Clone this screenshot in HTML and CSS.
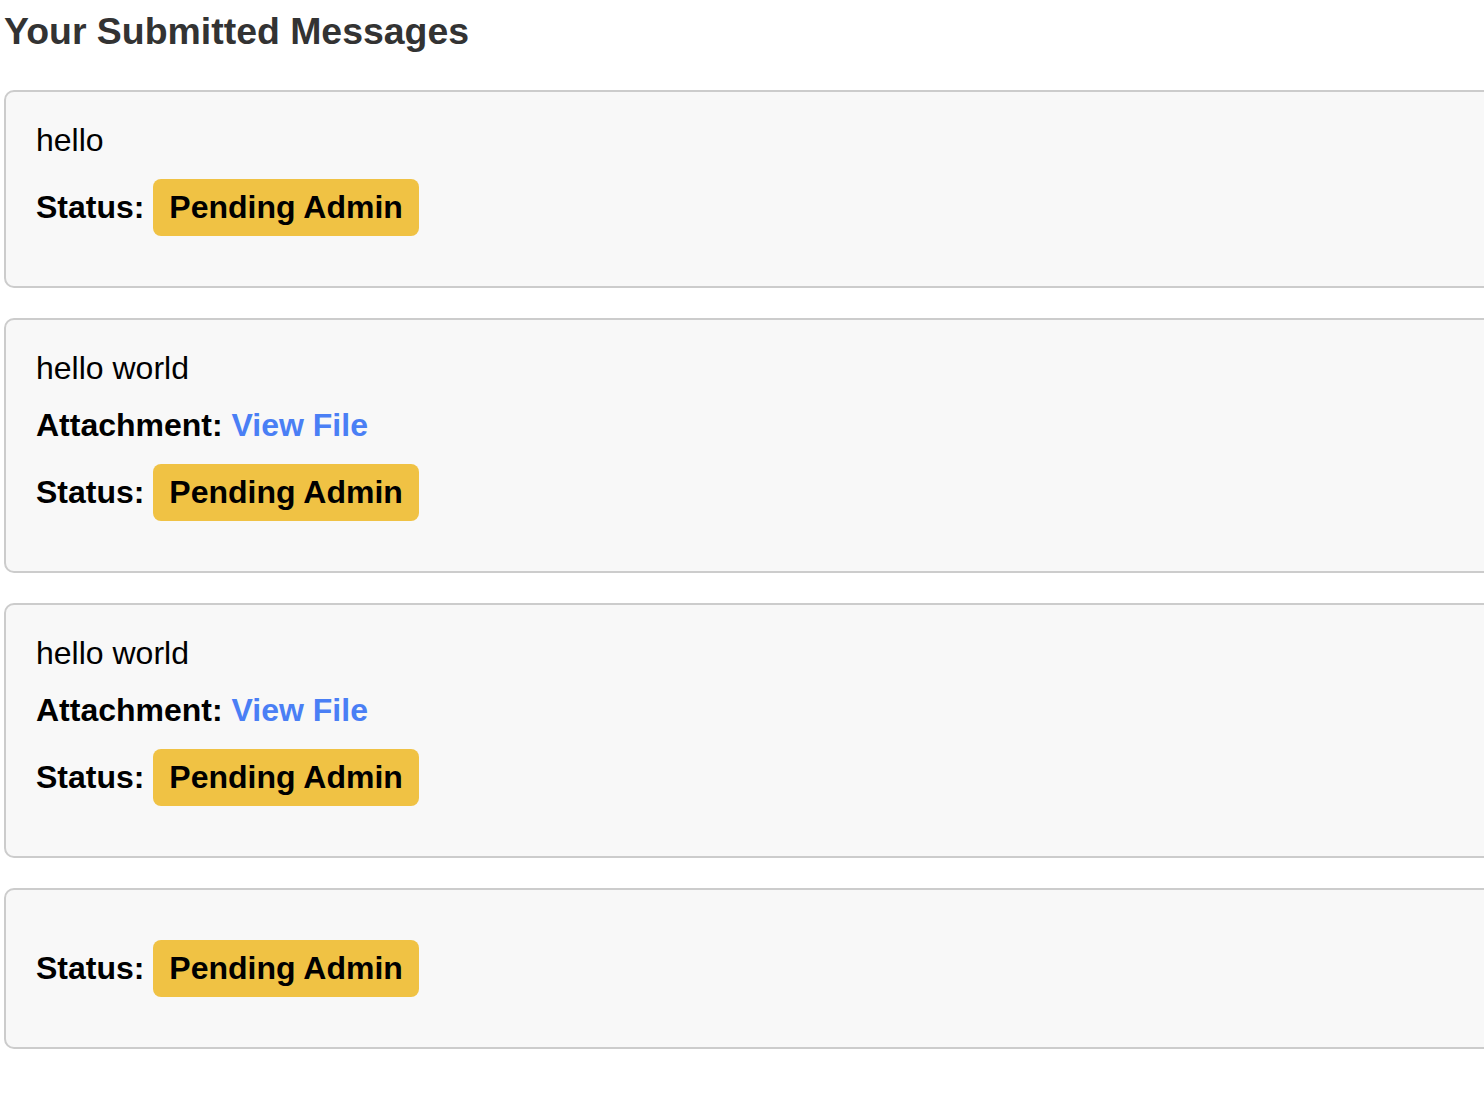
FILE: index.html
```html
<!DOCTYPE html>
<html lang="en">
<head>
<meta charset="utf-8">
<title>Your Submitted Messages</title>
<link rel="stylesheet" href="styles.css">
</head>
<body>
<main class="page">
  <h3 class="title">Your Submitted Messages</h3>

  <section class="card">
    <div class="message">hello</div>
    <p class="row"><strong>Status:</strong> <span class="badge">Pending Admin</span></p>
  </section>

  <section class="card">
    <div class="message">hello world</div>
    <p class="row"><strong>Attachment:</strong> <a class="file-link" href="#">View File</a></p>
    <p class="row"><strong>Status:</strong> <span class="badge">Pending Admin</span></p>
  </section>

  <section class="card">
    <div class="message">hello world</div>
    <p class="row"><strong>Attachment:</strong> <a class="file-link" href="#">View File</a></p>
    <p class="row"><strong>Status:</strong> <span class="badge">Pending Admin</span></p>
  </section>

  <section class="card">
    <div class="message"></div>
    <p class="row"><strong>Status:</strong> <span class="badge">Pending Admin</span></p>
  </section>
</main>
</body>
</html>
```
FILE: styles.css
```css
html, body {
  margin: 0;
  padding: 0;
  overflow: hidden;
  background: #ffffff;
}

body {
  font-family: "Liberation Sans", Arial, sans-serif;
  font-size: 32px;
  color: #000000;
}

.page {
  padding: 10px 0 0 4px;
  width: 1640px;
}

.title {
  margin: 0 0 37px 0;
  font-size: 37.44px;
  font-weight: bold;
  color: #333333;
}

.card {
  background: #f8f8f8;
  border: 2px solid #cccccc;
  border-radius: 10px;
  padding: 30px;
  margin: 0 0 30px 0;
}

.message {
  margin: 0;
}

.row {
  margin: 20px 0;
}

.row strong {
  font-weight: bold;
}

.file-link {
  color: #4a7ff5;
  font-weight: bold;
  text-decoration: none;
}

.badge {
  display: inline-block;
  background: #f0c244;
  color: #000000;
  font-weight: bold;
  padding: 10px 16px;
  border-radius: 8px;
}
```
